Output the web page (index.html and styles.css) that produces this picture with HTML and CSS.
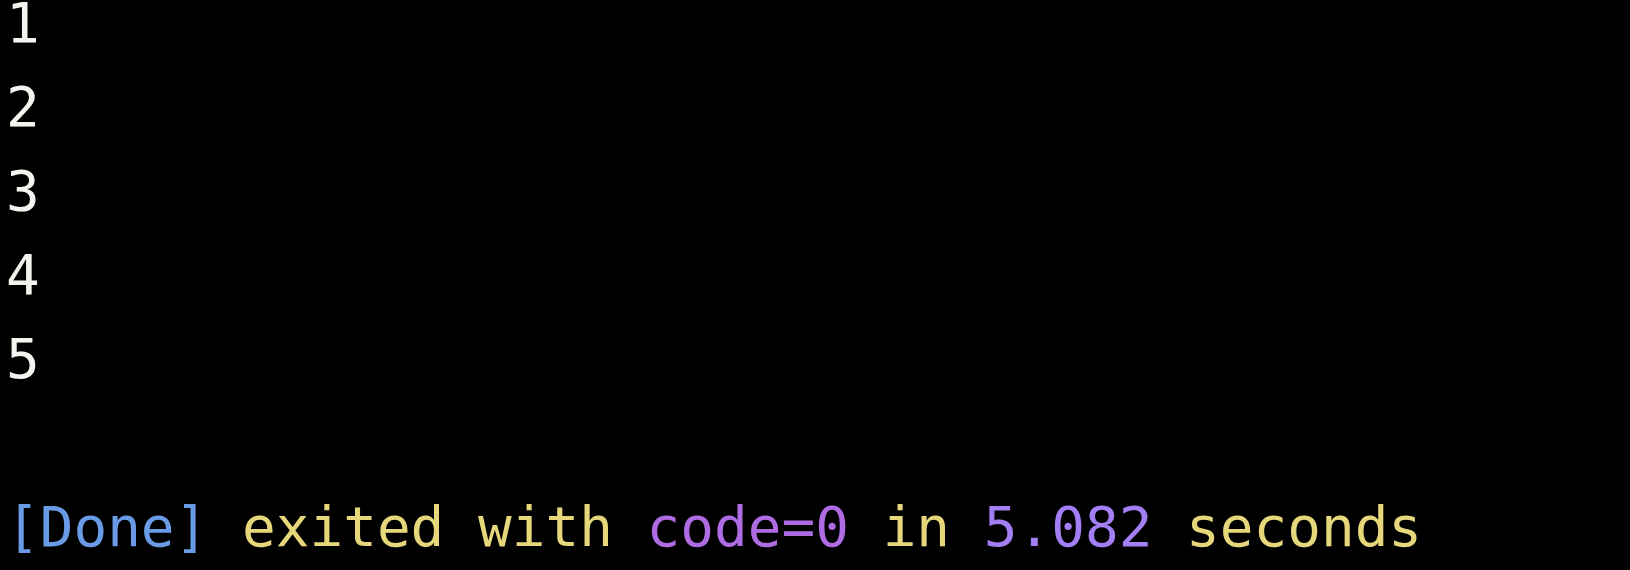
FILE: index.html
```html
<!DOCTYPE html>
<html>
<head>
<meta charset="utf-8">
<link rel="stylesheet" href="styles.css">
</head>
<body>
<div class="console">
  <div class="line out">1</div>
  <div class="line out">2</div>
  <div class="line out">3</div>
  <div class="line out">4</div>
  <div class="line out">5</div>
  <div class="line"></div>
  <div class="line"><span class="tag">[Done]</span> <span class="msg">exited with</span> <span class="code">code=0</span> <span class="msg">in</span> <span class="num">5.082</span> <span class="msg">seconds</span></div>
</div>
</body>
</html>
```

FILE: styles.css
```css
html, body {
  margin: 0;
  padding: 0;
  background: #000000;
  height: 100%;
  overflow: hidden;
}

.console {
  padding-left: 6px;
  font-family: "DejaVu Sans Mono", "Liberation Mono", monospace;
  font-size: 56px;
  line-height: 46px;
  color: #f4f4ee;
}

.line {
  height: 84px;
  white-space: pre;
}

.tag {
  color: #6a9be6;
}

.msg {
  color: #e5d77a;
}

.code {
  color: #ae6be3;
}

.num {
  color: #a47ef5;
}
```
